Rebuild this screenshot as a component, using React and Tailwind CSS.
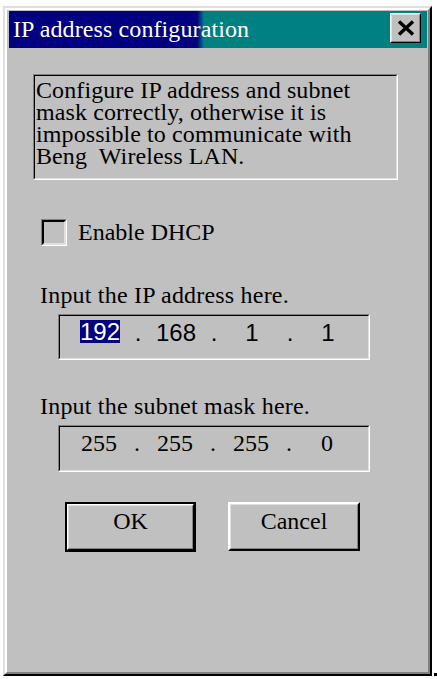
export default function App() {
  return (
    <div className="w-[437px] h-[679px] bg-white flex items-end pl-[3px] pt-[6px] pb-[3px] font-['Liberation_Serif',serif] text-black">
      <div className="w-[429px] h-[670px] flex border-2 border-t-[#dfdfdf] border-l-[#dfdfdf] border-r-black border-b-black bg-[#c0c0c0]">
        <div className="flex-1 flex flex-col border-2 border-t-white border-l-white border-r-[#808080] border-b-[#808080] pt-[1px] pl-[2px] pr-[1px]">
          {/* Title bar */}
          <div className="h-[37px] flex items-start justify-between bg-[linear-gradient(90deg,#000080_188px,#008080_195px)]">
            <div className="pl-[4px] pt-[6px] text-white text-[24px] leading-[24px] tracking-[0.1px]">
              IP address configuration
            </div>
            <div className="mt-[2px] mr-[6px] w-[31px] h-[30px] flex border-[1px] border-t-white border-l-white border-r-black border-b-black">
              <div className="flex-1 flex items-center justify-center bg-[#c0c0c0] border-[1px] border-t-[#dfdfdf] border-l-[#dfdfdf] border-r-[#808080] border-b-[#808080]">
                <svg width="18" height="16" viewBox="0 0 18 16">
                  <path d="M2 1.5 L16 14.5 M16 1.5 L2 14.5" stroke="#000" strokeWidth="3.4" fill="none" />
                </svg>
              </div>
            </div>
          </div>

          {/* Description */}
          <div className="mt-[26px] ml-[24px] w-[365px] h-[106px] flex border-[1px] border-t-[#808080] border-l-[#808080] border-r-white border-b-white">
            <div className="flex-1 flex flex-col border-[1px] border-t-black border-l-black border-r-[#dfdfdf] border-b-[#dfdfdf] pt-[3px] pl-[1px] text-[24px] leading-[22px] tracking-[0.1px] whitespace-nowrap">
              <span>Configure IP address and subnet</span>
              <span>mask correctly, otherwise it is</span>
              <span>impossible to communicate with</span>
              <span>Beng&nbsp; Wireless LAN.</span>
            </div>
          </div>

          {/* Checkbox */}
          <div className="mt-[39px] ml-[32px] flex items-start">
            <div className="w-[26px] h-[27px] flex border-[1px] border-t-[#808080] border-l-[#808080] border-r-white border-b-white">
              <div className="flex-1 border-[2px] border-t-black border-l-black border-r-[#dfdfdf] border-b-[#dfdfdf] bg-[#c0c0c0]" />
            </div>
            <div className="ml-[11px] text-[24px] leading-[27px]">Enable DHCP</div>
          </div>

          {/* IP */}
          <div className="mt-[37px] ml-[31px] text-[24px] leading-[24px] tracking-[0.2px]">Input the IP address here.</div>
          <div className="mt-[7px] ml-[49px] w-[312px] h-[46px] flex border-[1px] border-t-[#808080] border-l-[#808080] border-r-white border-b-white">
            <div className="flex-1 flex items-start border-[1px] border-t-black border-l-black border-r-[#dfdfdf] border-b-[#dfdfdf] pt-[5px] pl-[10px] font-['Liberation_Sans',sans-serif] text-[24px] leading-[24px]">
              <div className="w-[60px] flex justify-center">
                <span className="bg-[#000080] text-white leading-[23px] -mt-[1px]">192</span>
              </div>
              <div className="w-[16px] text-center">.</div>
              <div className="w-[60px] text-center">168</div>
              <div className="w-[16px] text-center">.</div>
              <div className="w-[60px] text-center">1</div>
              <div className="w-[16px] text-center">.</div>
              <div className="w-[60px] text-center">1</div>
            </div>
          </div>

          {/* Subnet */}
          <div className="mt-[34px] ml-[31px] text-[24px] leading-[24px] tracking-[0.2px]">Input the subnet mask here.</div>
          <div className="mt-[7px] ml-[49px] w-[312px] h-[47px] flex border-[1px] border-t-[#808080] border-l-[#808080] border-r-white border-b-white">
            <div className="flex-1 flex items-start border-[1px] border-t-black border-l-black border-r-[#dfdfdf] border-b-[#dfdfdf] pt-[4px] pl-[9px] font-['Liberation_Serif',serif] text-[24px] leading-[24px]">
              <div className="w-[60px] text-center">255</div>
              <div className="w-[16px] text-center">.</div>
              <div className="w-[60px] text-center">255</div>
              <div className="w-[16px] text-center">.</div>
              <div className="w-[60px] text-center">255</div>
              <div className="w-[16px] text-center">.</div>
              <div className="w-[60px] text-center">0</div>
            </div>
          </div>

          {/* Buttons */}
          <div className="mt-[30px] ml-[56px] flex items-start gap-[32px]">
            <div className="w-[131px] h-[50px] flex border-[2px] border-black">
              <div className="flex-1 flex border-[1px] border-t-white border-l-white border-r-black border-b-black">
                <div className="flex-1 flex justify-center border-[1px] border-t-[#dfdfdf] border-l-[#dfdfdf] border-r-[#808080] border-b-[#808080] pt-[3px] text-[24px] leading-[24px]">
                  OK
                </div>
              </div>
            </div>
            <div className="w-[132px] h-[49px] flex border-[2px] border-t-white border-l-white border-r-black border-b-black">
              <div className="flex-1 flex justify-center border-[1px] border-t-[#dfdfdf] border-l-[#dfdfdf] border-r-[#808080] border-b-[#808080] pt-[4px] text-[24px] leading-[24px]">
                Cancel
              </div>
            </div>
          </div>
        </div>
      </div>
      <div className="ml-[2px] w-[3px] h-[3px] bg-black" />
    </div>
  );
}
